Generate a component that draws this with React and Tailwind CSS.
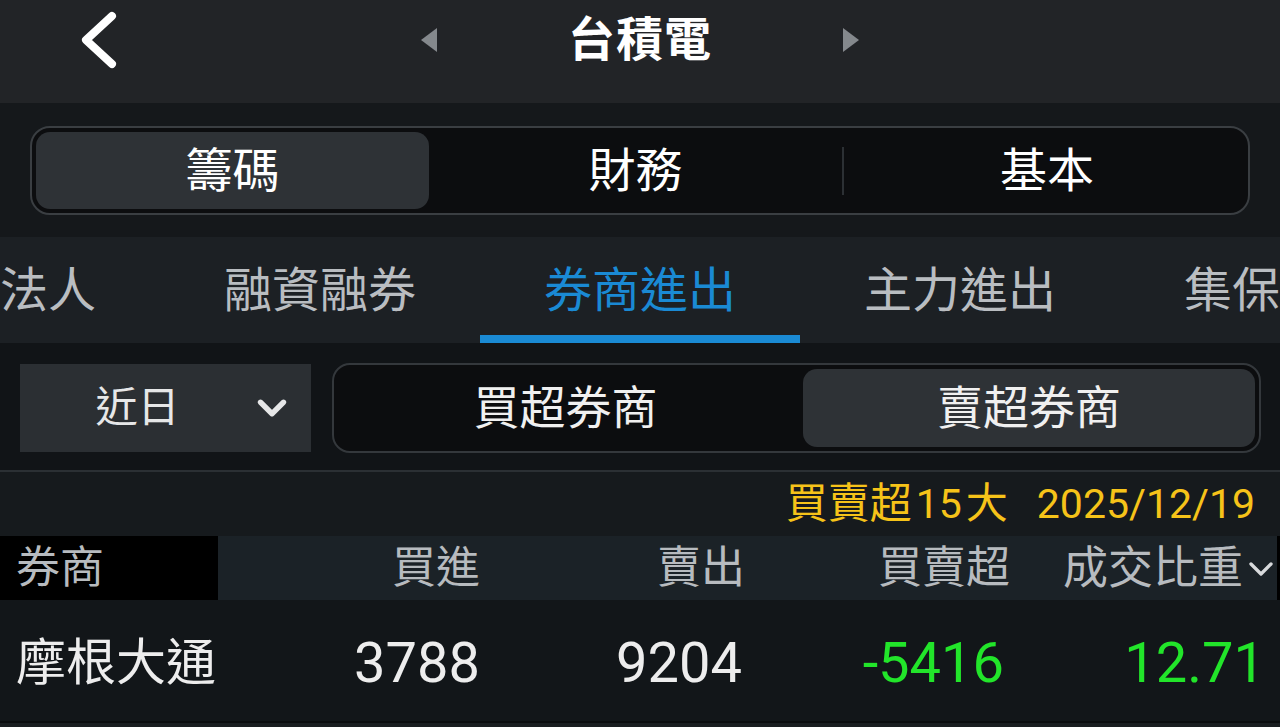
import { ChevronDown } from "lucide-react";

const font = { fontFamily: '"Roboto", "Noto Sans CJK TC", sans-serif' };

export default function App() {
  const tabs = [
    { label: "法人" },
    { label: "融資融券" },
    { label: "券商進出", active: true },
    { label: "主力進出" },
    { label: "集保" },
  ];

  return (
    <div className="w-[1280px] h-[727px] overflow-hidden bg-[#121619] text-white" style={font}>
      {/* top bar */}
      <div className="h-[103px] bg-[#222427] flex items-start">
        <div className="w-[200px] pl-[76px] pt-[10px] shrink-0">
          <svg width="44" height="60" viewBox="0 0 44 60" fill="none">
            <polyline points="36,6 10,30 36,54" stroke="white" strokeWidth="8" strokeLinecap="round" strokeLinejoin="round" />
          </svg>
        </div>
        <div className="flex-1 flex items-center justify-center gap-[131px] pr-[200px] pt-[16px]">
          <div className="w-0 h-0 border-y-[12px] border-y-transparent border-r-[16px] border-r-[#85898d]" />
          <span className="text-[47px] font-bold leading-none tracking-[1px]">台積電</span>
          <div className="w-0 h-0 border-y-[12px] border-y-transparent border-l-[16px] border-l-[#85898d]" />
        </div>
      </div>

      {/* main segmented */}
      <div className="h-[134px] bg-[#15181b] px-[30px] pt-[23px]">
        <div className="h-[89px] rounded-[20px] border-2 border-[#3a3e42] bg-[#0c0d0f] flex items-center p-[4px]">
          <div className="w-[393px] h-full rounded-[14px] bg-[#2e3236] flex items-center justify-center text-[47px] leading-none">
            籌碼
          </div>
          <div className="w-[413px] h-full flex items-center justify-center text-[47px] leading-none">
            財務
          </div>
          <div className="w-[2px] h-[48px] bg-[#2c3034]" />
          <div className="flex-1 h-full flex items-center justify-center text-[47px] leading-none pl-[6px]">
            基本
          </div>
        </div>
      </div>

      {/* sub tabs */}
      <div className="h-[106px] bg-[#1c2024] flex items-stretch overflow-hidden">
        <div className="flex items-stretch -ml-[64px]">
          {tabs.map((t) => (
            <div key={t.label} className="shrink-0 flex flex-col">
              <div
                className={
                  "flex-1 flex items-center px-[64px] text-[48px] leading-none pt-[10px] whitespace-nowrap " +
                  (t.active ? "text-[#1a8ad4]" : "text-[#b9bdc1]")
                }
              >
                {t.label}
              </div>
              <div className={"h-[8px] " + (t.active ? "bg-[#1a8ad4]" : "")} />
            </div>
          ))}
        </div>
      </div>

      {/* filters */}
      <div className="h-[127px] bg-[#111417] flex items-center gap-[21px] px-[20px] pt-[2px]">
        <div className="w-[291px] h-[88px] bg-[#2b2f33] flex items-center shrink-0">
          <span className="flex-1 text-center text-[42px] leading-none text-[#e6e7e8] pl-[6px]">近日</span>
          <ChevronDown size={46} strokeWidth={2.8} className="text-[#e6e7e8] mr-[16px]" />
        </div>
        <div className="flex-1 h-[90px] rounded-[18px] border-2 border-[#34383c] bg-[#0c0d0f] flex items-center p-[4px] -mr-[1px]">
          <div className="flex-1 h-full flex items-center justify-center text-[46px] leading-none text-[#f0f0f0] pr-[10px]">
            買超券商
          </div>
          <div className="w-[452px] h-full rounded-[14px] bg-[#2e3236] flex items-center justify-center text-[46px] leading-none text-[#f0f0f0]">
            賣超券商
          </div>
        </div>
      </div>

      {/* title */}
      <div className="h-[2px] bg-[#2b3034]" />
      <div className="h-[64px] bg-[#161a1d] flex items-center justify-end pr-[25px] text-[41px] leading-none text-[#f6c319]">
        <span className="text-[42px]">買賣超</span>
        <span className="ml-[4px]">15</span>
        <span className="ml-[4px] text-[42px]">大</span>
        <span className="ml-[29px]">2025/12/19</span>
      </div>

      {/* header row */}
      <div className="h-[64px] bg-[#1b2227] flex items-center text-[44px] leading-none text-[#b7bbbf]">
        <div className="w-[218px] h-full bg-black flex items-center pl-[16px] shrink-0">券商</div>
        <div className="w-[262px] text-right shrink-0">買進</div>
        <div className="w-[265px] text-right shrink-0">賣出</div>
        <div className="w-[265px] text-right shrink-0">買賣超</div>
        <div className="flex-1 flex items-center justify-end">
          <span className="text-[45px]">成交比重</span>
          <ChevronDown size={40} strokeWidth={2} className="-ml-[2px] mt-[2px] -mr-[4px] text-[#d8dadc]" />
        </div>
        <div className="w-[3px] h-full bg-black shrink-0" />
      </div>

      {/* data row */}
      <div className="h-[121px] bg-[#121619] flex items-center leading-none pt-[4px]">
        <div className="w-[218px] pl-[16px] text-[50px] text-[#ededed] whitespace-nowrap shrink-0">摩根大通</div>
        <div className="w-[262px] text-right text-[56px] text-[#ededed] shrink-0">3788</div>
        <div className="w-[262px] text-right text-[56px] text-[#ededed] shrink-0">9204</div>
        <div className="w-[262px] text-right text-[56px] text-[#22e52a] shrink-0">-5416</div>
        <div className="flex-1 text-right pr-[15px] text-[56px] text-[#22e52a]">12.71</div>
      </div>
      <div className="h-[2px] bg-[#0b0d0f]" />
      <div className="h-[10px] bg-[#1a1e21]" />
    </div>
  );
}
